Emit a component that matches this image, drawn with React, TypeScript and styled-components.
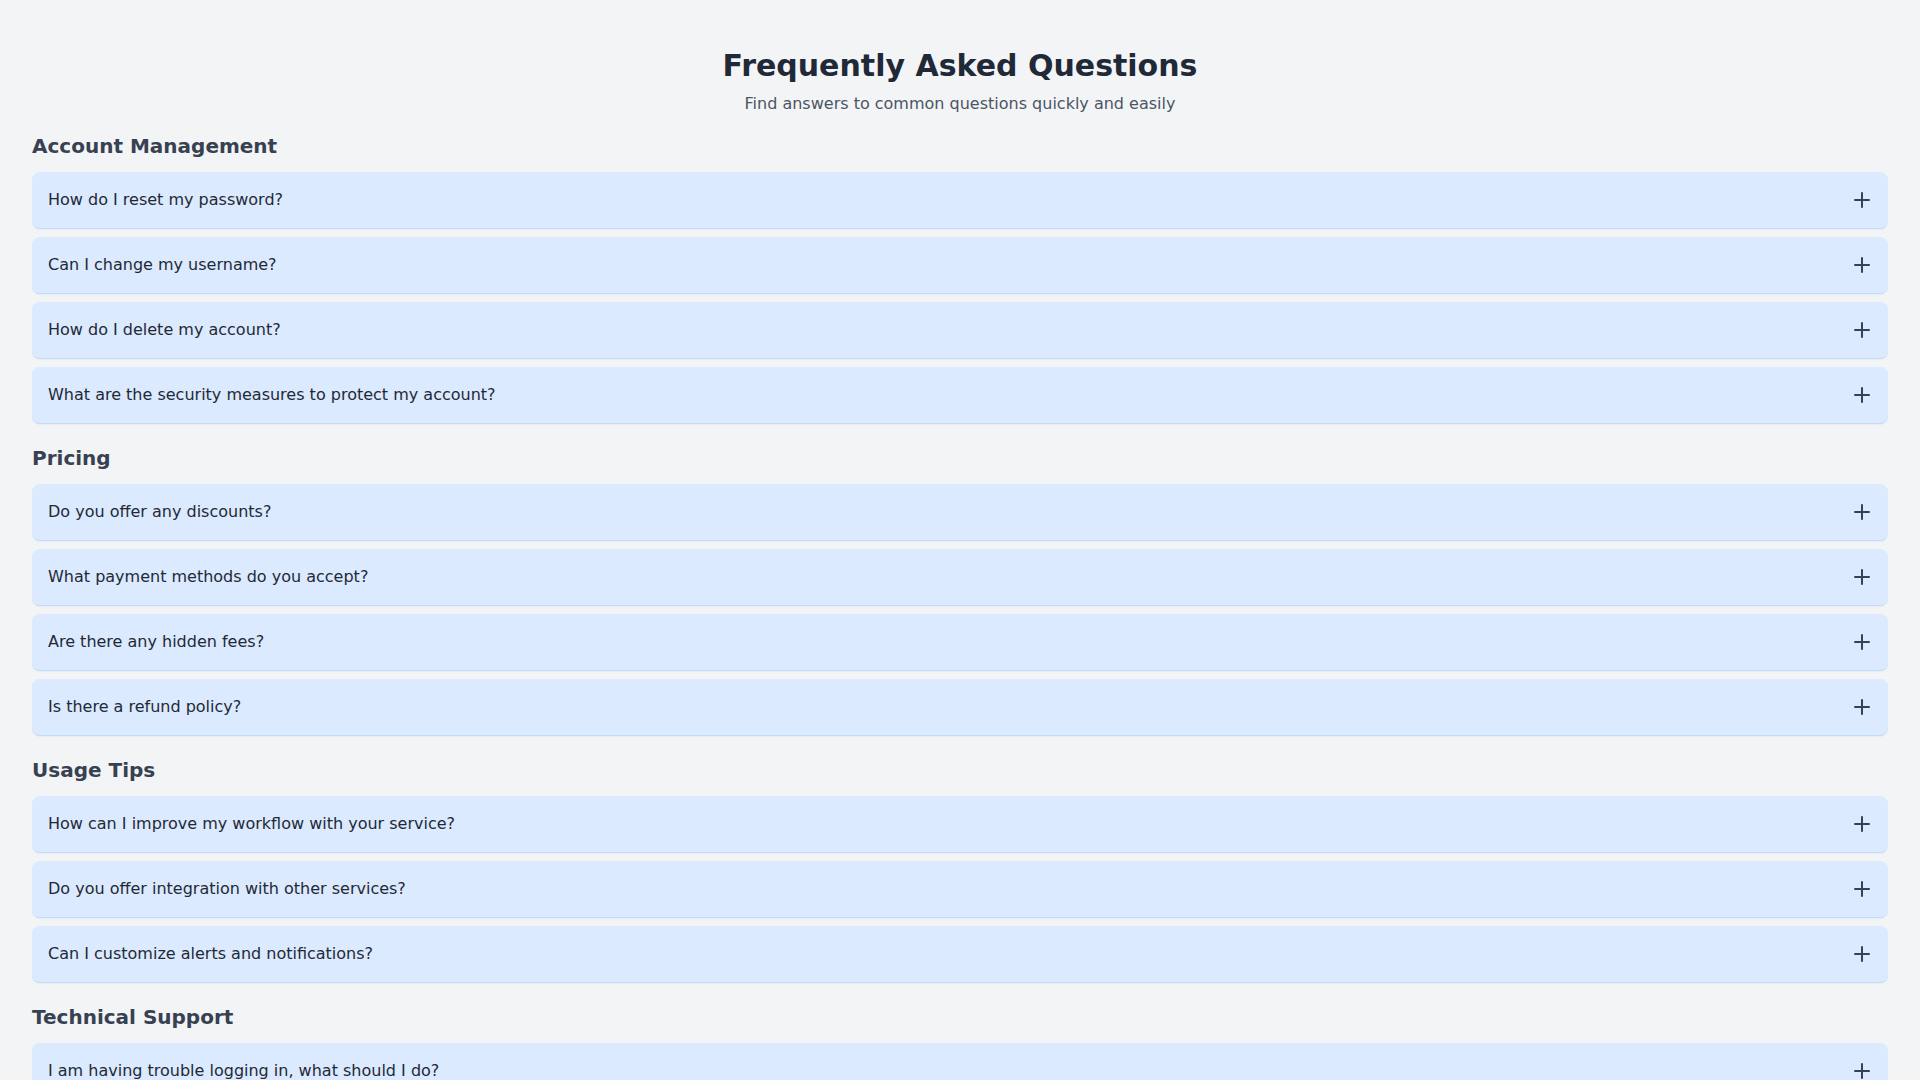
import React, { useState } from "react";
import styled, { createGlobalStyle } from "styled-components";
import { Plus, Minus } from "lucide-react";

const GlobalStyle = createGlobalStyle`
  html, body {
    margin: 0;
    padding: 0;
    background: #f3f4f6;
  }
  body {
    font-family: "DejaVu Sans", sans-serif;
    color: #1f2937;
  }
  * { box-sizing: border-box; }
`;

const Page = styled.div`
  min-height: 100vh;
  background: #f3f4f6;
  padding: 48px 32px 32px;
  display: flex;
  flex-direction: column;
`;

const Header = styled.header`
  display: flex;
  flex-direction: column;
  align-items: center;
  gap: 8px;
  margin-bottom: 16px;
`;

const Title = styled.h1`
  margin: 0;
  font-size: 30px;
  line-height: 36px;
  font-weight: 700;
  color: #1f2937;
`;

const Subtitle = styled.p`
  margin: 0;
  font-size: 16px;
  line-height: 24px;
  color: #4b5563;
`;

const Sections = styled.div`
  display: flex;
  flex-direction: column;
  gap: 20px;
`;

const Section = styled.section`
  display: flex;
  flex-direction: column;
`;

const SectionTitle = styled.h2`
  margin: 0 0 12px;
  font-size: 20px;
  line-height: 28px;
  font-weight: 700;
  color: #374151;
`;

const List = styled.div`
  display: flex;
  flex-direction: column;
  gap: 8px;
`;

const Item = styled.div`
  background: #dbeafe;
  border-radius: 8px;
  border-bottom: 1px solid #bfdbfe;
  box-shadow: 0 1px 2px rgba(0, 0, 0, 0.04);
`;

const QuestionButton = styled.button`
  width: 100%;
  display: flex;
  align-items: center;
  justify-content: space-between;
  padding: 16px 14px 16px 16px;
  background: transparent;
  border: none;
  cursor: pointer;
  font-family: "DejaVu Sans", sans-serif;
  font-size: 16px;
  line-height: 24px;
  color: #1f2937;
  text-align: left;
`;

const IconWrap = styled.span`
  display: flex;
  color: #374151;
`;

const Answer = styled.div`
  padding: 0 16px 16px;
  font-size: 15px;
  line-height: 22px;
  color: #374151;
`;

type FAQ = { q: string; a: string };
type Group = { title: string; items: FAQ[] };

const groups: Group[] = [
  {
    title: "Account Management",
    items: [
      { q: "How do I reset my password?", a: "Click “Forgot password” on the login page and follow the emailed link." },
      { q: "Can I change my username?", a: "Yes, you can change your username from your profile settings." },
      { q: "How do I delete my account?", a: "Go to Settings → Account and choose “Delete account”." },
      { q: "What are the security measures to protect my account?", a: "We use encryption, two-factor authentication and continuous monitoring." },
    ],
  },
  {
    title: "Pricing",
    items: [
      { q: "Do you offer any discounts?", a: "We offer discounts for annual plans, students and non-profits." },
      { q: "What payment methods do you accept?", a: "We accept major credit cards and PayPal." },
      { q: "Are there any hidden fees?", a: "No, all fees are shown up front." },
      { q: "Is there a refund policy?", a: "Yes, refunds are available within 30 days of purchase." },
    ],
  },
  {
    title: "Usage Tips",
    items: [
      { q: "How can I improve my workflow with your service?", a: "Use templates, shortcuts and automations to save time." },
      { q: "Do you offer integration with other services?", a: "Yes, we integrate with many popular tools." },
      { q: "Can I customize alerts and notifications?", a: "Yes, from the notification settings page." },
    ],
  },
  {
    title: "Technical Support",
    items: [
      { q: "I am having trouble logging in, what should I do?", a: "Clear your browser cache, reset your password, or contact support." },
    ],
  },
];

function FaqItem({ item }: { item: FAQ }) {
  const [open, setOpen] = useState(false);
  return (
    <Item>
      <QuestionButton onClick={() => setOpen((o) => !o)}>
        <span>{item.q}</span>
        <IconWrap>{open ? <Minus size={24} strokeWidth={2} /> : <Plus size={24} strokeWidth={2} />}</IconWrap>
      </QuestionButton>
      {open && <Answer>{item.a}</Answer>}
    </Item>
  );
}

export default function App() {
  return (
    <>
      <GlobalStyle />
      <Page>
        <Header>
          <Title>Frequently Asked Questions</Title>
          <Subtitle>Find answers to common questions quickly and easily</Subtitle>
        </Header>
        <Sections>
          {groups.map((g) => (
            <Section key={g.title}>
              <SectionTitle>{g.title}</SectionTitle>
              <List>
                {g.items.map((it) => (
                  <FaqItem key={it.q} item={it} />
                ))}
              </List>
            </Section>
          ))}
        </Sections>
      </Page>
    </>
  );
}
